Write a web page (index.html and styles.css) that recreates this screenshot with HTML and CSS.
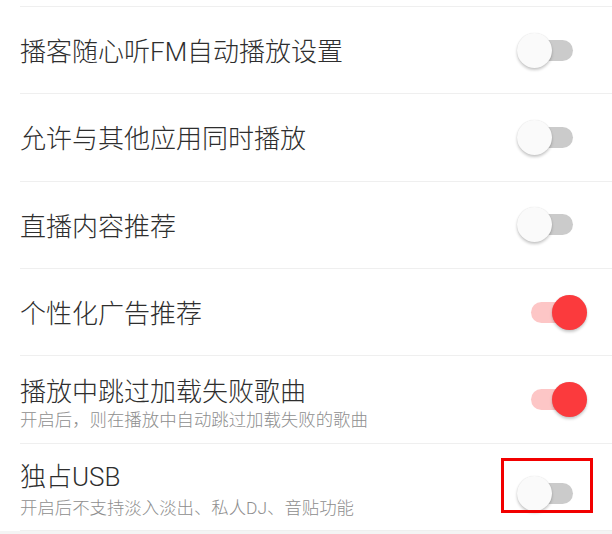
FILE: index.html
```html
<!DOCTYPE html>
<html lang="zh-CN">
<head>
<meta charset="utf-8">
<title>设置</title>
<link rel="stylesheet" href="styles.css">
</head>
<body>
<div class="list">
  <div class="row">
    <div class="text"><div class="title">播客随心听FM自动播放设置</div></div>
    <div class="switch"><div class="track"></div><div class="thumb"></div></div>
  </div>
  <div class="row">
    <div class="text"><div class="title">允许与其他应用同时播放</div></div>
    <div class="switch"><div class="track"></div><div class="thumb"></div></div>
  </div>
  <div class="row">
    <div class="text"><div class="title">直播内容推荐</div></div>
    <div class="switch"><div class="track"></div><div class="thumb"></div></div>
  </div>
  <div class="row">
    <div class="text"><div class="title">个性化广告推荐</div></div>
    <div class="switch on"><div class="track"></div><div class="thumb"></div></div>
  </div>
  <div class="row">
    <div class="text with-sub">
      <div class="title">播放中跳过加载失败歌曲</div>
      <div class="sub">开启后，则在播放中自动跳过加载失败的歌曲</div>
    </div>
    <div class="switch on"><div class="track"></div><div class="thumb"></div></div>
  </div>
  <div class="row last">
    <div class="text with-sub">
      <div class="title">独占USB</div>
      <div class="sub">开启后不支持淡入淡出、私人DJ、音贴功能</div>
    </div>
    <div class="switch low"><div class="track"></div><div class="thumb"></div><div class="mark"></div></div>
  </div>
</div>
<div class="footer"></div>
</body>
</html>
```
FILE: styles.css
```css
html, body {
  margin: 0;
  padding: 0;
  background: #ffffff;
}
body {
  width: 612px;
  height: 534px;
  overflow: hidden;
  font-family: Roboto, "Noto Sans CJK SC", sans-serif;
  font-weight: 300;
  color: #333333;
}
.list {
  padding-top: 6px;
}
.row {
  box-sizing: border-box;
  height: 87.33px;
  margin-left: 20px;
  padding-right: 25px;
  border-top: 1px solid #efefef;
  display: flex;
  align-items: center;
  justify-content: space-between;
}
.row.last {
  border-bottom: 1px solid #efefef;
  height: 88.33px;
}
.text {
  display: flex;
  flex-direction: column;
  padding-top: 4px;
}
.text.with-sub {
  padding-top: 10px;
}
.row.last .text {
  padding-top: 7px;
}
.row.last .title {
  margin-bottom: 2.5px;
}
.title {
  font-size: 26px;
  line-height: 32px;
  color: #2e2e2e;
  white-space: nowrap;
}
.sub {
  font-size: 17.4px;
  line-height: 24px;
  color: #8e8e8e;
  white-space: nowrap;
}
.switch {
  position: relative;
  width: 70px;
  height: 35px;
  display: flex;
  align-items: center;
  justify-content: center;
}
.switch.low {
  margin-top: 14px;
}
.track {
  width: 42px;
  height: 21px;
  border-radius: 11px;
  background: #cbcbcb;
}
.thumb {
  position: absolute;
  top: 0;
  left: 0;
  width: 35px;
  height: 35px;
  border-radius: 50%;
  background: #fafafa;
  box-shadow: 0 2px 3px rgba(0, 0, 0, 0.22), 0 0 1px rgba(0, 0, 0, 0.12);
}
.switch.on .track {
  background: #fdc6c6;
}
.switch.on .thumb {
  left: 35px;
  background: #fb3a3d;
}
.mark {
  position: absolute;
  left: -16px;
  top: -18px;
  width: 86px;
  height: 49px;
  border: 3px solid #f20000;
}
.footer {
  height: 10px;
  background: #f4f4f4;
}
```
